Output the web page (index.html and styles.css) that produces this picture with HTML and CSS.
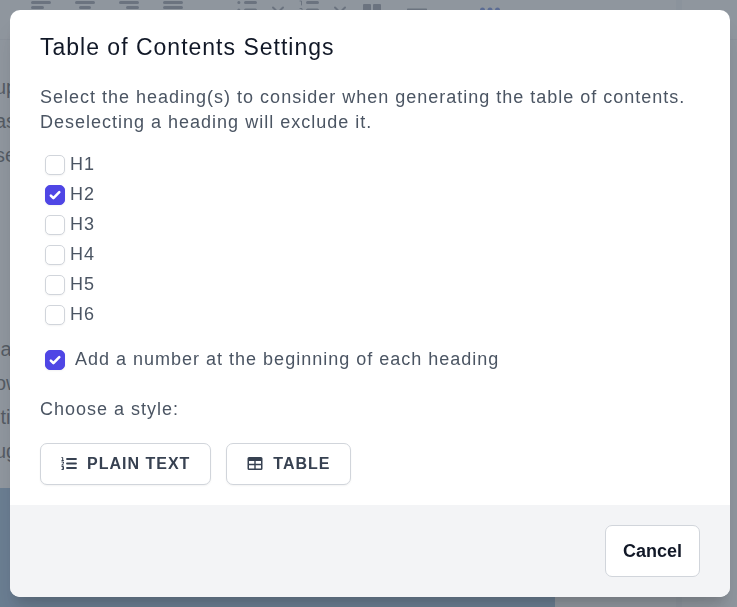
FILE: index.html
```html
<!DOCTYPE html>
<html lang="en">
<head>
    <meta charset="utf-8">
    <title>Table of Contents Settings</title>
    <link rel="stylesheet" href="styles.css">
</head>
<body>
    <!-- Editor behind the modal -->
    <div class="editor">
        <div class="toolbar">
            <div class="tools">
                <svg class="icon" viewBox="0 0 20 20"><path d="M1.5 2.5h17M1.5 7.5h10M1.5 12.5h17M1.5 17.5h10"/></svg>
                <svg class="icon" viewBox="0 0 20 20"><path d="M1.5 2.5h17M5.5 7.5h9M1.5 12.5h17M5.5 17.5h9"/></svg>
                <svg class="icon" viewBox="0 0 20 20"><path d="M1.5 2.5h17M8.5 7.5h10M1.5 12.5h17M8.5 17.5h10"/></svg>
                <svg class="icon" viewBox="0 0 20 20"><path d="M1.5 2.5h17M1.5 7.5h17M1.5 12.5h17M1.5 17.5h17"/></svg>
            </div>
            <div class="lists">
                <svg class="icon" viewBox="0 0 20 20"><path d="M8.5 2.5h10M8.5 10h10M8.5 17.5h10M1.8 2.5h.1M1.8 10h.1M1.8 17.5h.1"/></svg>
                <svg class="chevron" viewBox="0 0 12 20"><path d="M1 7.5l5 5 5-5"/></svg>
                <svg class="icon" viewBox="0 0 20 20"><path d="M8.5 2.5h10M8.5 10h10M8.5 17.5h10"/><path class="thin" d="M1 1h1.5v4M1 8.5h2v1.5l-2 2.5h2"/></svg>
                <svg class="chevron" viewBox="0 0 12 20"><path d="M1 7.5l5 5 5-5"/></svg>
            </div>
            <div class="tools">
                <svg class="icon" viewBox="0 0 20 20"><path class="solid" d="M2 4h5q1 0 1 1v10H0V5q0-1 1-1zM11 4h6q1 0 1 1v10h-8V5q0-1 1-1z"/></svg>
                <svg class="icon" viewBox="0 0 20 20"><path d="M1 10h18"/></svg>
            </div>
            <svg class="icon more" viewBox="0 0 20 20"><circle cx="2.5" cy="10" r="2.5"/><circle cx="10" cy="10" r="2.5"/><circle cx="17.5" cy="10" r="2.5"/></svg>
        </div>
        <div class="document">
            <p>up<br>as<br>se</p>
            <p>&nbsp;a<br>ow<br>&nbsp;ti<br>ug</p>
            <div class="picture"></div>
        </div>
        <div class="gutter"></div>
    </div>

    <div class="overlay">
        <div class="modal" role="dialog" aria-modal="true" aria-labelledby="modalTitle">
            <div class="modal-body">
                <h1 id="modalTitle">Table of Contents Settings</h1>
                <p class="intro">Select the heading(s) to consider when generating the table of contents. Deselecting a heading will exclude it.</p>

                <div class="headings">
                    <label class="option"><input type="checkbox">H1</label>
                    <label class="option"><input type="checkbox" checked>H2</label>
                    <label class="option"><input type="checkbox">H3</label>
                    <label class="option"><input type="checkbox">H4</label>
                    <label class="option"><input type="checkbox">H5</label>
                    <label class="option"><input type="checkbox">H6</label>
                </div>

                <label class="option numbering"><input type="checkbox" checked>Add a number at the beginning of each heading</label>

                <p class="choose">Choose a style:</p>
                <div class="styles">
                    <button type="button" class="style-button">
                        <svg viewBox="0 0 16 14"><path d="M6 2h9M6 6.5h9M6 11h9" stroke="currentColor" stroke-width="1.8" stroke-linecap="round"/><path d="M.5.5h1.2v3M.5 3.5h2.3M.5 5h2v1.3L.7 8h2M.5 9.5h2v3H.5M1 11h1.5" fill="none" stroke="currentColor"/></svg>
                        Plain text
                    </button>
                    <button type="button" class="style-button">
                        <svg viewBox="0 0 16 14"><path fill="currentColor" fill-rule="evenodd" d="M2 0h12q1.500 0 1.500 1.500v10q0 1.500-1.500 1.500H2Q.5 13 .5 11.500v-10Q.5 0 2 0zM2 4v2.800h5.300V4zM8.700 4v2.800H14V4zM2 8.200v3.300h5.300V8.200zM8.700 8.200v3.300H14V8.200z"/></svg>
                        Table
                    </button>
                </div>
            </div>
            <div class="modal-footer">
                <button type="button" class="cancel">Cancel</button>
            </div>
        </div>
    </div>
</body>
</html>
```
FILE: styles.css
```css
* {
    box-sizing: border-box;
}

body {
    margin: 0;
    font-family: "Liberation Sans", Arial, sans-serif;
    font-size: 18px;
    line-height: 25px;
    color: #4b5563;
}

h1,
p {
    margin: 0;
}

/* Editor page */
.editor {
    position: relative;
    height: 100vh;
    overflow: hidden;
    background-color: #f9fafb;
}

.toolbar {
    display: flex;
    height: 40px;
    padding-left: 31px;
    border-bottom: 1px solid #e5e7eb;
}

.tools {
    display: flex;
    gap: 24px;
}

.lists {
    display: flex;
    gap: 15px;
    margin: 0 17px 0 54px;
}

.icon,
.chevron {
    width: 20px;
    height: 20px;
    fill: none;
    stroke: #6b7280;
    stroke-width: 3;
    stroke-linecap: round;
}

.chevron {
    width: 12px;
    stroke-width: 2;
}

.icon .thin {
    stroke-width: 1;
}

.icon .solid {
    fill: #6b7280;
    stroke: none;
}

.more {
    margin-left: 53px;
    fill: #2f55d4;
    stroke: none;
}

.document {
    margin-left: -5px;
    padding-top: 30px;
    font-size: 20px;
    line-height: 34px;
    color: #111111;
}

.document p + p {
    margin-top: 160px;
}

.picture {
    width: 560px;
    height: 200px;
    margin-top: 20px;
    background-color: #6a9ac8;
}

/* Scrollbar track of the editor */
.gutter {
    position: absolute;
    top: 0;
    right: 55px;
    width: 6px;
    height: 100%;
    background-color: #eceef1;
}

/* Modal */
.overlay {
    position: fixed;
    inset: 0;
    padding: 10px 7px 10px 10px;
    background-color: rgba(107, 116, 127, 0.75);
}

.modal {
    overflow: hidden;
    border-radius: 10px;
    background-color: #ffffff;
    box-shadow: 0 20px 25px -5px rgba(0, 0, 0, 0.1), 0 10px 10px -5px rgba(0, 0, 0, 0.1);
}

.modal-body {
    padding: 22px 30px 20px;
    letter-spacing: 1px;
}

.modal-body h1 {
    margin-bottom: 23px;
    font-size: 23px;
    font-weight: 400;
    line-height: 30px;
    color: #111827;
}

.intro {
    margin-bottom: 14px;
}

.option {
    display: flex;
    align-items: center;
    gap: 5px;
    height: 30px;
    padding-left: 5px;
}

.option input {
    appearance: none;
    flex: none;
    width: 20px;
    height: 20px;
    margin: 2px 0 0;
    border: 1px solid #d1d5db;
    border-radius: 5px;
    background-color: #ffffff;
    box-shadow: 0 1px 2px rgba(0, 0, 0, 0.05);
}

.option input:checked {
    border-color: #4f46e5;
    background: #4f46e5 url("data:image/svg+xml,%3Csvg viewBox='0 0 16 16' fill='none' stroke='white' stroke-width='2.3' stroke-linecap='round' stroke-linejoin='round' xmlns='http://www.w3.org/2000/svg'%3E%3Cpath d='M4.3 8.5l2.3 2.3 5.2-5.4'/%3E%3C/svg%3E") center / 100% no-repeat;
}

.numbering {
    gap: 10px;
    margin: 15px 0 23px;
}

.choose {
    margin-bottom: 21px;
}

.styles {
    display: flex;
    gap: 15px;
}

.style-button {
    display: flex;
    align-items: center;
    gap: 10px;
    height: 42px;
    padding: 0 20px;
    border: 1px solid #d1d5db;
    border-radius: 7px;
    background-color: #ffffff;
    box-shadow: 0 1px 2px rgba(0, 0, 0, 0.05);
    font-family: inherit;
    font-size: 16px;
    font-weight: 700;
    letter-spacing: 1px;
    text-transform: uppercase;
    color: #374151;
}

.style-button svg {
    width: 16px;
    height: 14px;
}

.modal-footer {
    display: flex;
    justify-content: flex-end;
    padding: 20px 30px;
    background-color: #f3f4f6;
}

.cancel {
    height: 52px;
    padding: 0 17px;
    border: 1px solid #d1d5db;
    border-radius: 7px;
    background-color: #ffffff;
    font-family: inherit;
    font-size: 18px;
    font-weight: 700;
    color: #111827;
}
```
